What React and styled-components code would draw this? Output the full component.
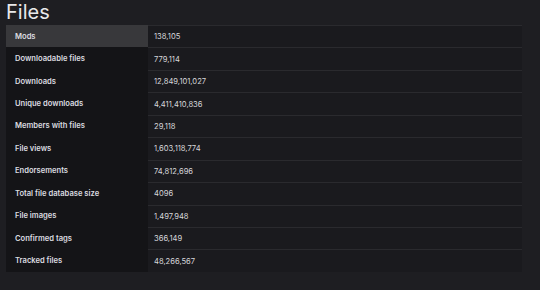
import { Fragment } from "react";
import styled, { createGlobalStyle } from "styled-components";

const stats = [
  ["Mods", "138,105"],
  ["Downloadable files", "779,114"],
  ["Downloads", "12,849,101,027"],
  ["Unique downloads", "4,411,410,836"],
  ["Members with files", "29,118"],
  ["File views", "1,603,118,774"],
  ["Endorsements", "74,812,696"],
  ["Total file database size", "4096"],
  ["File images", "1,497,948"],
  ["Confirmed tags", "366,149"],
  ["Tracked files", "48,266,567"],
];

const GlobalStyle = createGlobalStyle`
  html, body {
    margin: 0;
    background: #1e1e22;
  }
  body {
    font-family: Inter, "Noto Sans", sans-serif;
    color: #e2e2e6;
  }
`;

const Page = styled.div`
  width: 540px;
  height: 290px;
  padding: 0 18px 0 6px;
  box-sizing: border-box;
`;

const Title = styled.h2`
  margin: 0;
  height: 25px;
  font-size: 20px;
  font-weight: 400;
  line-height: 24px;
  color: #e8e8ea;
`;

const Table = styled.div`
  display: grid;
  grid-template-columns: 142px 1fr;
`;

const Label = styled.div`
  height: 22.45px;
  display: flex;
  align-items: center;
  padding-left: 9px;
  font-size: 7.6px;
  font-weight: 600;
  color: #dcdce0;
  background: ${(p) => (p.$active ? "#38383b" : "#141417")};
`;

const Value = styled.div`
  height: 22.45px;
  box-sizing: border-box;
  display: flex;
  align-items: center;
  padding-left: 6px;
  font-size: 7.6px;
  color: #d6d6da;
  background: #1a1a1e;
  border-top: 1px solid #2a2a2e;
`;

export default function App() {
  return (
    <Page>
      <GlobalStyle />
      <Title>Files</Title>
      <Table>
        {stats.map(([label, value], i) => (
          <Fragment key={label}>
            <Label $active={i === 0}>{label}</Label>
            <Value>{value}</Value>
          </Fragment>
        ))}
      </Table>
    </Page>
  );
}
